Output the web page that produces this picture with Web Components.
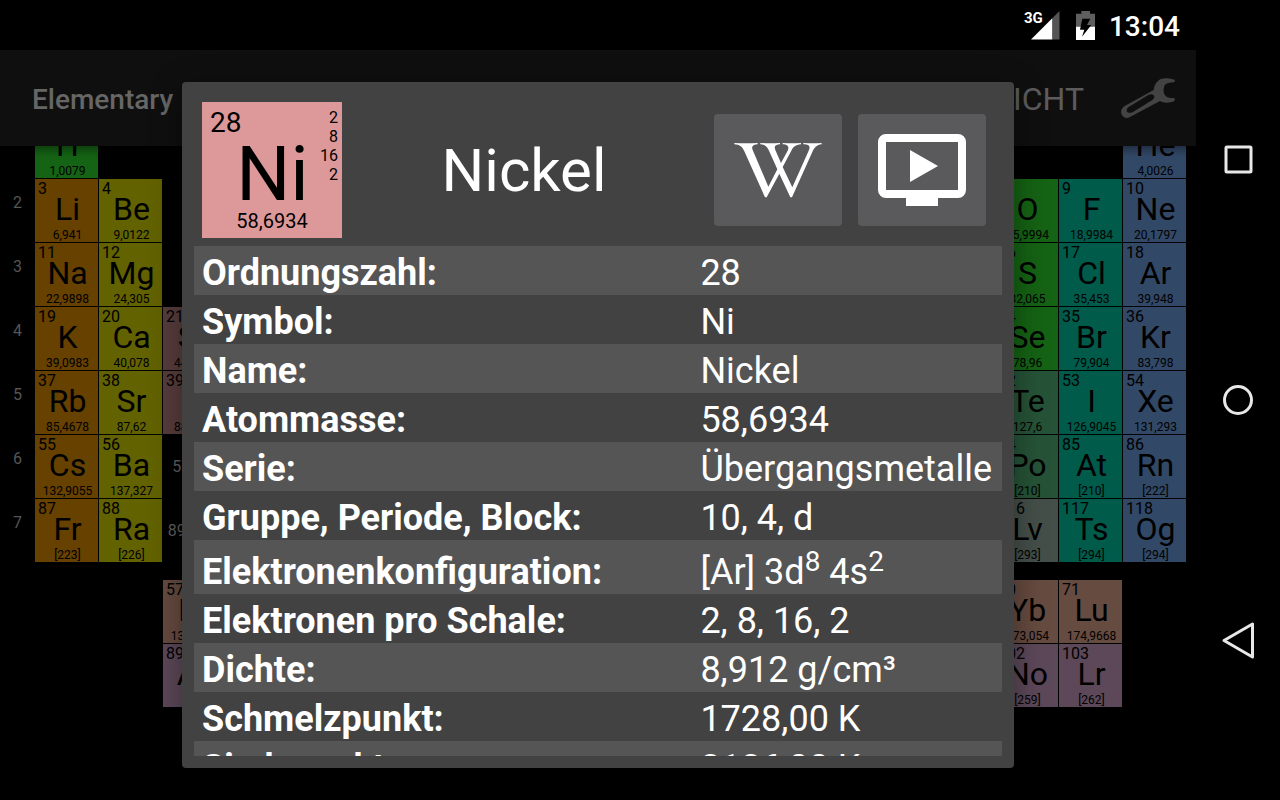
<!DOCTYPE html>
<html lang="de">
<head>
<meta charset="utf-8">
<meta name="viewport" content="width=device-width, initial-scale=1">
<title>Elementary</title>
<style>
html, body { margin: 0; height: 100%; background: #000; font-family: Roboto, "Liberation Sans", sans-serif; }
</style>
</head>
<body>
<app-screen>
  <status-bar slot="status" time="13:04" network="3G"></status-bar>
  <app-bar slot="bar" heading="Elementary">ANSICHT</app-bar>
  <periodic-table slot="content"></periodic-table>
  <element-dialog slot="dialog" name="Nickel">
    <element-tile slot="tile" number="28" symbol="Ni" mass="58,6934" shells="2,8,16,2"></element-tile>
    <element-details></element-details>
  </element-dialog>
  <nav-bar slot="nav"></nav-bar>
</app-screen>

<script>
class Base extends HTMLElement {
  connectedCallback() {
    if (!this.shadowRoot) this.attachShadow({ mode: 'open' }).innerHTML = this.render();
  }
  attr(name) { return this.getAttribute(name) || ''; }
}

customElements.define('app-screen', class extends Base {
  render() {
    return `<style>
      :host { display: grid; grid-template-columns: minmax(0, 1fr) 84px; height: 100vh; background: #000; overflow: hidden; }
      .app { display: flex; flex-direction: column; min-width: 0; min-height: 0; }
      .window { flex: 1; min-height: 0; display: flex; flex-direction: column; position: relative; }
      main { flex: 1; min-height: 0; overflow: hidden; }
      .overlay { position: absolute; inset: 0; padding: 32px; display: flex; justify-content: center; z-index: 2; }
    </style>
    <div class="app">
      <slot name="status"></slot>
      <div class="window">
        <slot name="bar"></slot>
        <main><slot name="content"></slot></main>
        <div class="overlay"><slot name="dialog"></slot></div>
      </div>
    </div>
    <slot name="nav"></slot>`;
  }
});

customElements.define('status-bar', class extends Base {
  render() {
    return `<style>
      :host { display: flex; align-items: center; justify-content: flex-end; gap: 16px; height: 50px; padding: 0 16px; color: #fff; }
      .signal { position: relative; width: 36px; height: 30px; }
      .signal svg { position: absolute; right: 0; bottom: 0; }
      .signal span { position: absolute; left: 0; top: 0; font: 700 15px/16px Roboto, sans-serif; }
      svg { display: block; }
      time { font-size: 28px; font-weight: 500; line-height: 32px; margin-left: -2px; padding-top: 4px; }
    </style>
    <div class="signal">
      <svg width="29" height="29" viewBox="0 0 29 29" aria-hidden="true">
        <path d="M0 28.500 21.500 7V28.500Z" fill="#fff"/><path d="M21.500 7 28.500 0V28.500H21.500Z" fill="#555"/>
      </svg>
      <span>${this.attr('network')}</span>
    </div>
    <svg width="19" height="29" viewBox="0 0 57 87" aria-hidden="true">
      <path d="M0 8H16V0H42V8H57V47H0Z" fill="#5f5f5f"/><path d="M0 47H57V87H0Z" fill="#fff"/>
      <path d="M19 23H43L33 42H46L18 77L25 56H12Z" fill="#000"/>
    </svg>
    <time>${this.attr('time')}</time>`;
  }
});

customElements.define('app-bar', class extends Base {
  render() {
    return `<style>
      :host { display: flex; align-items: center; justify-content: space-between; height: 96px; flex: none; box-sizing: border-box;
        padding: 0 20px 0 32px; background: #0f0f0f; color: #666; position: relative; z-index: 1; box-shadow: 0 4px 8px rgba(0,0,0,.4); }
      h1 { margin: 0; padding-top: 4px; font-size: 28px; font-weight: 500; line-height: 32px; }
      .actions { display: flex; align-items: center; gap: 36px; }
      button { background: none; border: 0; padding: 0; color: #5c5c5c; font: 400 32px/36px Roboto, sans-serif; }
      .view { padding-top: 2px; }
      svg { display: block; }
    </style>
    <h1>${this.attr('heading')}</h1>
    <div class="actions">
      <button class="view" type="button"><slot></slot></button>
      <button type="button" aria-label="Einstellungen">
        <svg width="56" height="42" viewBox="420 231 168 126" fill="#434343">
          <path fill-rule="evenodd" d="M584 239C566 233 545 232 535 242C525 250 522 260 521 270L434 318C422 326 420 338 428 348C434 355 442 355 450 351L540 303C552 310 570 309 583 303L585 296C578 292 570 296 561 291C549 284 549 270 553 258C558 247 570 249 584 246ZM446 321L505 285C514 280 523 283 523 291Q523 296 517 300L460 335C450 341 441 339 440 332Q440 325 446 321Z"/>
        </svg>
      </button>
    </div>`;
  }
});

customElements.define('element-cell', class extends Base {
  render() {
    return `<style>
      :host { display: flex; flex-direction: column; min-width: 0; color: #000; text-align: center; }
      .n { font-size: 16px; line-height: 20px; text-align: left; padding-left: 3px; }
      .s { font-size: 32px; line-height: 20px; padding-left: 2px; }
      .m { font-size: 12px; line-height: 14px; margin-top: auto; white-space: nowrap; padding-left: 2px; }
    </style>
    <span class="n">${this.attr('number')}</span>
    <span class="s">${this.attr('symbol')}</span>
    <span class="m">${this.attr('mass')}</span>`;
  }
});

const SERIES = {
  alkali: '#664100', earth: '#626200', transition: '#583d3d', nonmetal: '#156314', halogen: '#005b4b',
  noble: '#324867', metalloid: '#265337', metal: '#3e5147', unknown: '#454f49', lanthanide: '#664b40', actinide: '#5d4859'
};
/* number, symbol, mass, column, row, series */
const ELEMENTS = [
  [1, 'H', '1,0079', 1, 1, 'nonmetal'], [2, 'He', '4,0026', 18, 1, 'noble'],
  [3, 'Li', '6,941', 1, 2, 'alkali'], [4, 'Be', '9,0122', 2, 2, 'earth'],
  [8, 'O', '15,9994', 16, 2, 'nonmetal'], [9, 'F', '18,9984', 17, 2, 'halogen'], [10, 'Ne', '20,1797', 18, 2, 'noble'],
  [11, 'Na', '22,9898', 1, 3, 'alkali'], [12, 'Mg', '24,305', 2, 3, 'earth'],
  [16, 'S', '32,065', 16, 3, 'nonmetal'], [17, 'Cl', '35,453', 17, 3, 'halogen'], [18, 'Ar', '39,948', 18, 3, 'noble'],
  [19, 'K', '39,0983', 1, 4, 'alkali'], [20, 'Ca', '40,078', 2, 4, 'earth'], [21, 'Sc', '44,9559', 3, 4, 'transition'],
  [34, 'Se', '78,96', 16, 4, 'nonmetal'], [35, 'Br', '79,904', 17, 4, 'halogen'], [36, 'Kr', '83,798', 18, 4, 'noble'],
  [37, 'Rb', '85,4678', 1, 5, 'alkali'], [38, 'Sr', '87,62', 2, 5, 'earth'], [39, 'Y', '88,9059', 3, 5, 'transition'],
  [52, 'Te', '127,6', 16, 5, 'metalloid'], [53, 'I', '126,9045', 17, 5, 'halogen'], [54, 'Xe', '131,293', 18, 5, 'noble'],
  [55, 'Cs', '132,9055', 1, 6, 'alkali'], [56, 'Ba', '137,327', 2, 6, 'earth'],
  [84, 'Po', '[210]', 16, 6, 'metalloid'], [85, 'At', '[210]', 17, 6, 'halogen'], [86, 'Rn', '[222]', 18, 6, 'noble'],
  [87, 'Fr', '[223]', 1, 7, 'alkali'], [88, 'Ra', '[226]', 2, 7, 'earth'],
  [116, 'Lv', '[293]', 16, 7, 'unknown'], [117, 'Ts', '[294]', 17, 7, 'halogen'], [118, 'Og', '[294]', 18, 7, 'noble'],
  [57, 'La', '138,9055', 3, 9, 'lanthanide'], [70, 'Yb', '173,054', 16, 9, 'lanthanide'], [71, 'Lu', '174,9668', 17, 9, 'lanthanide'],
  [89, 'Ac', '[227]', 3, 10, 'actinide'], [102, 'No', '[259]', 16, 10, 'actinide'], [103, 'Lr', '[262]', 17, 10, 'actinide']
];

customElements.define('periodic-table', class extends Base {
  render() {
    const cells = ELEMENTS.map(([n, s, m, c, r, k]) =>
      `<element-cell number="${n}" symbol="${s}" mass="${m}" style="grid-area:${r}/${c + 1};background:${SERIES[k]}"></element-cell>`).join('');
    const periods = [2, 3, 4, 5, 6, 7].map(p => `<span class="period" style="grid-area:${p}/1">${p}</span>`).join('');
    return `<style>
      /* scrolled down by half of the first period */
      :host { display: grid; grid-template-columns: 34px repeat(18, minmax(0, 1fr)); grid-template-rows: repeat(7, 63px) 16px repeat(2, 63px);
        gap: 1px; padding-right: 10px; margin-top: -31px; }
      .period { padding-top: 14px; padding-left: 1px; font-size: 16px; line-height: 20px; text-align: center; color: #555; }
      .range { align-self: center; justify-self: center; font-size: 16px; line-height: 20px; padding-left: 2px; color: #5f5f5f; white-space: nowrap; }
    </style>${periods}${cells}
    <span class="range" style="grid-area:6/4">57–71</span>
    <span class="range" style="grid-area:7/4">89–103</span>`;
  }
});

customElements.define('element-tile', class extends Base {
  render() {
    return `<style>
      :host { display: grid; grid-template: 1fr / 1fr; width: 140px; height: 136px; background: #dd9999; color: #000; flex: none; }
      :host > * { grid-area: 1 / 1; }
      .n, .s, .m, .shells { grid-area: 1 / 1; }
      .n { font-size: 28px; line-height: 32px; padding: 5px 8px; }
      .s { font-size: 76px; line-height: 80px; text-align: center; align-self: start; padding: 32px 0 0 1px; }
      .m { font-size: 20px; line-height: 24px; text-align: center; align-self: end; padding-bottom: 5px; }
      .shells { margin: 0; padding: 6px 4px; list-style: none; font-size: 16px; line-height: 19px; text-align: right; }
    </style>
    <span class="n">${this.attr('number')}</span>
    <span class="s">${this.attr('symbol')}</span>
    <span class="m">${this.attr('mass')}</span>
    <ul class="shells">${this.attr('shells').split(',').map(x => `<li>${x}</li>`).join('')}</ul>`;
  }
});

customElements.define('element-details', class extends Base {
  render() {
    const rows = [
      ['Ordnungszahl:', '28'], ['Symbol:', 'Ni'], ['Name:', 'Nickel'], ['Atommasse:', '58,6934'],
      ['Serie:', 'Übergangsmetalle'], ['Gruppe, Periode, Block:', '10, 4, d'],
      ['Elektronenkonfiguration:', '[Ar] 3d<sup>8</sup> 4s<sup>2</sup>'],
      ['Elektronen pro Schale:', '2, 8, 16, 2'], ['Dichte:', '8,912 g/cm³'],
      ['Schmelzpunkt:', '1728,00 K'], ['Siedepunkt:', '3186,00 K']
    ];
    return `<style>
      :host { display: block; }
      table { width: 100%; border-collapse: collapse; color: #fff; font-size: 36px; line-height: 41px; }
      tr:nth-child(odd) { background: #555; }
      th, td { padding: 7px 8px 1px; text-align: left; vertical-align: baseline; white-space: nowrap; }
      th { width: 100%; font-weight: 700; }
      td { padding-right: 10px; }
      sup { font-size: 28px; line-height: 29px; vertical-align: 13px; }
    </style>
    <table><tbody>${rows.map(([a, b]) => `<tr><th scope="row">${a}</th><td>${b}</td></tr>`).join('')}</tbody></table>`;
  }
});

customElements.define('element-dialog', class extends Base {
  render() {
    return `<style>
      :host { display: flex; flex-direction: column; box-sizing: border-box; width: 100%; max-width: 832px; padding: 12px;
        background: #424242; color: #fff; border-radius: 4px; box-shadow: 0 8px 32px rgba(0,0,0,.4); }
      header { display: flex; align-items: center; padding: 8px; flex: none; }
      h2 { flex: 1; margin: 0; padding-top: 2px; text-align: center; font-size: 60px; line-height: 64px; font-weight: 400; }
      .actions { display: flex; gap: 16px; padding: 0 8px; }
      button { display: grid; place-items: center; width: 128px; height: 112px; padding: 0; border: 0; border-radius: 4px; background: #5a5a5c; color: #fff; }
      svg { display: block; fill: currentColor; }
      .body { flex: 1; min-height: 0; overflow-y: auto; scrollbar-width: none; }
    </style>
    <header>
      <slot name="tile"></slot>
      <h2>${this.attr('name')}</h2>
      <div class="actions">
        <button type="button" aria-label="Wikipedia">
          <svg width="88" height="56" viewBox="132 156 264 168"><path d="M133 159Q168 161 203 159V163C190 164 183 168 188 180L235 290L262 238L236 180C230 168 225 164 211 163V159Q240 161 270 159V163C257 164 251 168 256 180L273 219L293 182C299 168 292 164 278 163V159Q306 161 333 159V163C316 165 310 170 304 182L278 231L307 292L356 182C362 168 358 164 340 163V159Q368 161 395 159V163C380 165 374 172 368 184L306 322H301L268 251L230 322H225L163 184C156 168 148 164 133 163Z"/></svg>
        </button>
        <button type="button" aria-label="Video">
          <svg width="88" height="72" viewBox="0 0 88 72"><path fill-rule="evenodd" d="M8 0H80A8 8 0 0 1 88 8V56A8 8 0 0 1 80 64H60V72H28V64H8A8 8 0 0 1 0 56V8A8 8 0 0 1 8 0ZM8 8V56H80V8Z"/><path d="M32 16 60 32 32 48Z"/></svg>
        </button>
      </div>
    </header>
    <div class="body"><slot></slot></div>`;
  }
});

customElements.define('nav-bar', class extends Base {
  render() {
    return `<style>
      :host { display: flex; flex-direction: column; padding: 40px 0; background: #000; }
      button { flex: 1; display: grid; place-items: center; padding: 0; border: 0; background: none; }
      svg { display: block; fill: none; stroke: #e8e8e8; stroke-width: 3; stroke-linejoin: round; }
    </style>
    <button type="button" aria-label="Übersicht"><svg width="36" height="40" viewBox="0 0 36 40"><rect x="6" y="7" width="25" height="25" rx="1"/></svg></button>
    <button type="button" aria-label="Startseite"><svg width="36" height="40" viewBox="0 0 36 40"><circle cx="18" cy="20" r="13.500"/></svg></button>
    <button type="button" aria-label="Zurück"><svg width="36" height="40" viewBox="0 0 36 40"><path d="M4 20.500 32.500 4V37Z"/></svg></button>`;
  }
});
</script>
</body>
</html>
